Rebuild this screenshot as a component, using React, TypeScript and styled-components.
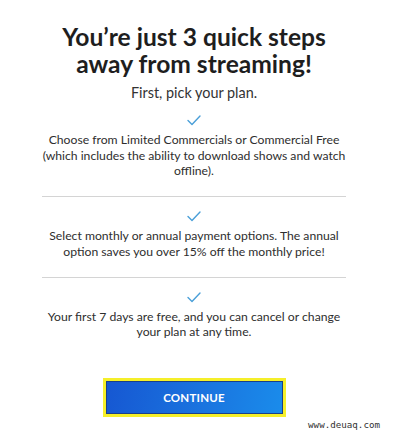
import React from "react";
import styled, { createGlobalStyle } from "styled-components";

const Global = createGlobalStyle`
  html, body { margin: 0; padding: 0; background: #ffffff; }
  body { font-family: Lato, "Open Sans", Arial, sans-serif; }
`;

const Page = styled.div`
  position: relative;
  width: 400px;
  height: 434px;
  background: #fff;
  overflow: hidden;
`;

const Column = styled.main`
  width: 304px;
  margin-left: 42px;
  padding-top: 23px;
  display: flex;
  flex-direction: column;
  align-items: center;
  text-align: center;
`;

const Title = styled.h1`
  margin: 0;
  font-family: Lato, sans-serif;
  font-weight: 700;
  font-size: 24.6px;
  line-height: 27px;
  color: #1e1e1e;
`;

const Subtitle = styled.p`
  margin: 7px 0 0;
  font-size: 14.4px;
  line-height: 18px;
  color: #333;
`;

const Steps = styled.ul`
  list-style: none;
  margin: -1px 0 0;
  padding: 0;
  width: 100%;
`;

const Step = styled.li<{ $last?: boolean }>`
  display: flex;
  flex-direction: column;
  align-items: center;
  padding: 14px 0 ${(p) => (p.$last ? "0" : "17.5px")};
  border-bottom: ${(p) => (p.$last ? "none" : "1px solid #d4d4d4")};
`;

const Check = styled.svg`
  width: 14px;
  height: 11px;
  display: block;
  margin-bottom: 6px;
`;

const StepText = styled.p`
  margin: 0;
  font-size: 12.2px;
  line-height: 15.5px;
  color: #2e2e2e;
  white-space: nowrap;
`;

const Button = styled.button`
  margin-top: 38px;
  width: 183px;
  height: 39px;
  border: 3px solid #f5ef2a;
  padding: 0;
  background: linear-gradient(100deg, #1657d2 0%, #1a74df 55%, #1a8ceb 100%);
  box-shadow: inset 0 0 0 1px #1a3f8a;
  color: #fff;
  font-family: Lato, sans-serif;
  font-weight: 700;
  font-size: 11.5px;
  letter-spacing: 0.2px;
  cursor: pointer;
`;

const Watermark = styled.span`
  position: absolute;
  right: 20px;
  bottom: 4px;
  font-family: "DejaVu Sans Mono", monospace;
  font-size: 9.2px;
  color: #333;
`;

const CheckIcon = () => (
  <Check viewBox="0 0 14 11">
    <polyline
      points="1,5.5 5,9.5 13,1"
      fill="none"
      stroke="#4a9fd8"
      strokeWidth="1.4"
      strokeLinecap="round"
      strokeLinejoin="round"
    />
  </Check>
);

const steps: string[][] = [
  [
    "Choose from Limited Commercials or Commercial Free",
    "(which includes the ability to download shows and watch",
    "offline).",
  ],
  [
    "Select monthly or annual payment options. The annual",
    "option saves you over 15% off the monthly price!",
  ],
  [
    "Your first 7 days are free, and you can cancel or change",
    "your plan at any time.",
  ],
];

export default function App() {
  return (
    <Page>
      <Global />
      <Column>
        <Title>
          You’re just 3 quick steps
          <br />
          away from streaming!
        </Title>
        <Subtitle>First, pick your plan.</Subtitle>
        <Steps>
          {steps.map((lines, i) => (
            <Step key={i} $last={i === steps.length - 1}>
              <CheckIcon />
              <StepText>
                {lines.map((l, j) => (
                  <React.Fragment key={j}>
                    {j > 0 && <br />}
                    {l}
                  </React.Fragment>
                ))}
              </StepText>
            </Step>
          ))}
        </Steps>
        <Button>CONTINUE</Button>
      </Column>
      <Watermark>www.deuaq.com</Watermark>
    </Page>
  );
}
